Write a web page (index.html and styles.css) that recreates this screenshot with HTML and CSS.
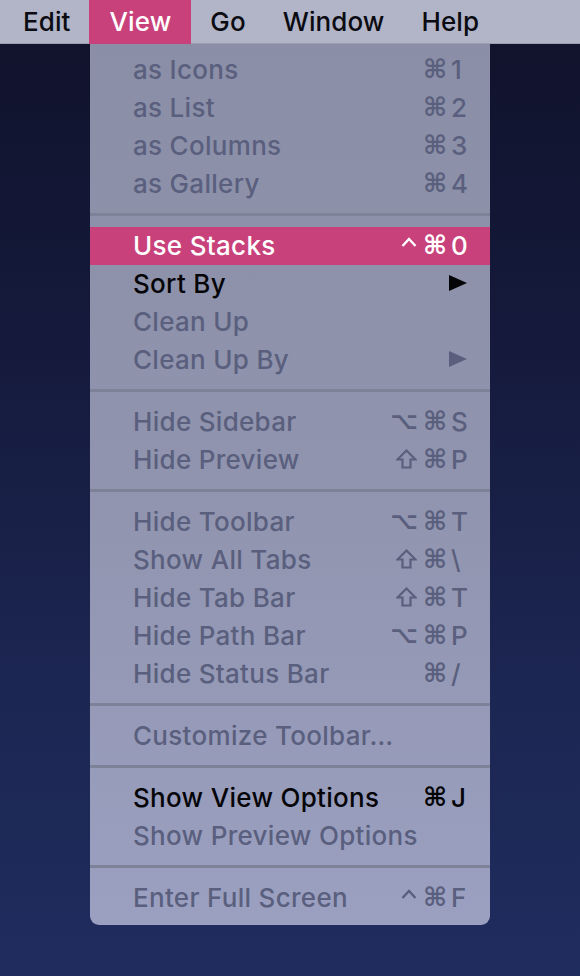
FILE: index.html
```html
<!DOCTYPE html>
<html lang="en">
<head>
<meta charset="utf-8">
<title>View menu</title>
<link rel="stylesheet" href="styles.css">
</head>
<body>
<div class="desktop">
  <nav class="menubar">
    <span class="mb-item">Edit</span>
    <span class="mb-item active">View</span>
    <span class="mb-item">Go</span>
    <span class="mb-item">Window</span>
    <span class="mb-item">Help</span>
  </nav>
  <div class="menu">
    <div class="group">
      <div class="row dis"><span class="label">as Icons</span><span class="sc"><span class="cmd">⌘</span><span class="key">1</span></span></div>
      <div class="row dis"><span class="label">as List</span><span class="sc"><span class="cmd">⌘</span><span class="key">2</span></span></div>
      <div class="row dis"><span class="label">as Columns</span><span class="sc"><span class="cmd">⌘</span><span class="key">3</span></span></div>
      <div class="row dis"><span class="label">as Gallery</span><span class="sc"><span class="cmd">⌘</span><span class="key">4</span></span></div>
    </div>
    <div class="sep"></div>
    <div class="group">
      <div class="row hl"><span class="label">Use Stacks</span><span class="sc"><svg class="ctrl" width="16" height="18" viewBox="0 0 16 18"><path d="M1.5 10 L8 3 L14.5 10" fill="none" stroke="currentColor" stroke-width="2.4"/></svg><span class="cmd">⌘</span><span class="key">0</span></span></div>
      <div class="row en"><span class="label">Sort By</span><svg class="arrow" width="18" height="16" viewBox="0 0 18 16"><polygon points="0,0 18,8 0,16" fill="currentColor"/></svg></div>
      <div class="row dis"><span class="label">Clean Up</span></div>
      <div class="row dis"><span class="label">Clean Up By</span><svg class="arrow" width="18" height="16" viewBox="0 0 18 16"><polygon points="0,0 18,8 0,16" fill="currentColor"/></svg></div>
    </div>
    <div class="sep"></div>
    <div class="group">
      <div class="row dis"><span class="label">Hide Sidebar</span><span class="sc"><span class="opt">⌥</span><span class="cmd">⌘</span><span class="key">S</span></span></div>
      <div class="row dis"><span class="label">Hide Preview</span><span class="sc"><svg class="shift" width="21" height="20" viewBox="0 0 21 20"><path d="M10.5 1.5 L19.5 10.5 L14.5 10.5 L14.5 18.5 L6.5 18.5 L6.5 10.5 L1.5 10.5 Z" fill="none" stroke="currentColor" stroke-width="2.2" stroke-linejoin="miter"/></svg><span class="cmd">⌘</span><span class="key">P</span></span></div>
    </div>
    <div class="sep"></div>
    <div class="group">
      <div class="row dis"><span class="label">Hide Toolbar</span><span class="sc"><span class="opt">⌥</span><span class="cmd">⌘</span><span class="key">T</span></span></div>
      <div class="row dis"><span class="label">Show All Tabs</span><span class="sc"><svg class="shift" width="21" height="20" viewBox="0 0 21 20"><path d="M10.5 1.5 L19.5 10.5 L14.5 10.5 L14.5 18.5 L6.5 18.5 L6.5 10.5 L1.5 10.5 Z" fill="none" stroke="currentColor" stroke-width="2.2" stroke-linejoin="miter"/></svg><span class="cmd">⌘</span><span class="key">\</span></span></div>
      <div class="row dis"><span class="label">Hide Tab Bar</span><span class="sc"><svg class="shift" width="21" height="20" viewBox="0 0 21 20"><path d="M10.5 1.5 L19.5 10.5 L14.5 10.5 L14.5 18.5 L6.5 18.5 L6.5 10.5 L1.5 10.5 Z" fill="none" stroke="currentColor" stroke-width="2.2" stroke-linejoin="miter"/></svg><span class="cmd">⌘</span><span class="key">T</span></span></div>
      <div class="row dis"><span class="label">Hide Path Bar</span><span class="sc"><span class="opt">⌥</span><span class="cmd">⌘</span><span class="key">P</span></span></div>
      <div class="row dis"><span class="label">Hide Status Bar</span><span class="sc"><span class="cmd">⌘</span><span class="key">/</span></span></div>
    </div>
    <div class="sep"></div>
    <div class="group">
      <div class="row dis"><span class="label">Customize Toolbar…</span></div>
    </div>
    <div class="sep"></div>
    <div class="group">
      <div class="row en"><span class="label">Show View Options</span><span class="sc"><span class="cmd">⌘</span><span class="key">J</span></span></div>
      <div class="row dis"><span class="label">Show Preview Options</span></div>
    </div>
    <div class="sep"></div>
    <div class="group">
      <div class="row dis"><span class="label">Enter Full Screen</span><span class="sc"><svg class="ctrl" width="16" height="18" viewBox="0 0 16 18"><path d="M1.5 10 L8 3 L14.5 10" fill="none" stroke="currentColor" stroke-width="2.4"/></svg><span class="cmd">⌘</span><span class="key">F</span></span></div>
    </div>
  </div>
</div>
</body>
</html>
```

FILE: styles.css
```css
* { box-sizing: border-box; }
html, body {
  margin: 0;
  padding: 0;
}
body {
  width: 580px;
  height: 976px;
  overflow: hidden;
  font-family: Inter, "Liberation Sans", "DejaVu Sans", sans-serif;
  background: linear-gradient(180deg, #10122a 0%, #151a3c 35%, #1c2652 70%, #1f2c5e 100%);
}
.desktop {
  position: relative;
  width: 580px;
  height: 976px;
}
.menubar {
  display: flex;
  height: 44px;
  padding-left: 4px;
  background: #b1b5c7;
  border-bottom: 1px solid #9a9eb2;
  font-size: 26px;
  font-weight: 500;
  letter-spacing: 0.1px;
  color: #0b0b12;
}
.mb-item {
  display: flex;
  align-items: center;
  padding: 0 18px 2px 19px;
  height: 44px;
}
.mb-item.active {
  background: #c8417b;
  color: #fff;
  padding: 0 20px 2px 21px;
}
.menu {
  position: absolute;
  left: 90px;
  top: 44px;
  width: 400px;
  padding: 7px 0 8px;
  background: linear-gradient(180deg, #8a8ea6 0%, #9094ae 50%, #9ba0c1 100%);
  border-radius: 0 0 9px 9px;
  font-size: 26px;
  font-weight: 500;
  letter-spacing: 0.3px;
}
.row {
  display: flex;
  align-items: center;
  justify-content: space-between;
  height: 38px;
  padding: 0 21px 2px 43px;
  white-space: nowrap;
}
.row.dis { color: #5a5f7e; }
.row.en { color: #050508; }
.row.hl { background: #c8417b; color: #fff; }
.sc {
  display: flex;
  align-items: center;
}
.cmd, .opt {
  font-family: "DejaVu Sans", sans-serif;
  letter-spacing: 0;
}
.cmd {
  font-size: 26px;
  font-weight: 700;
  margin-right: 4px;
}
.opt {
  font-size: 24px;
  font-weight: 700;
  margin-right: 5px;
}
.shift {
  margin-right: 6px;
  margin-top: -1px;
}
.ctrl {
  margin-right: 6px;
}
.key {
  width: 18px;
  text-align: left;
}
.arrow {
  margin-right: 2px;
}
.sep {
  height: 3px;
  margin: 10px 0 11px;
  background: #7e8299;
}
```
